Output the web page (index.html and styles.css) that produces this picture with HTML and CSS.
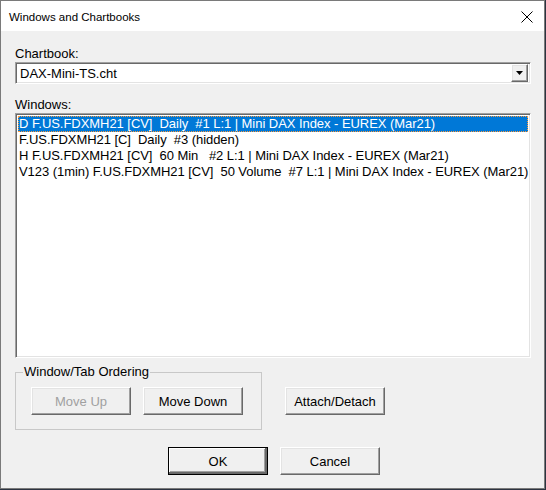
FILE: index.html
```html
<!DOCTYPE html>
<html>
<head>
<meta charset="utf-8">
<title>Windows and Chartbooks</title>
<link rel="stylesheet" href="styles.css">
</head>
<body>
<div class="window">
  <div class="titlebar">
    <span class="title">Windows and Chartbooks</span>
    <svg class="close" width="12" height="12" viewBox="0 0 12 12">
      <path d="M0.5 0.5 L11.5 11.5 M11.5 0.5 L0.5 11.5" stroke="#000" stroke-width="1" fill="none"/>
    </svg>
  </div>
  <div class="client">
    <div class="label">Chartbook:</div>
    <div class="combo">
      <span class="combo-text">DAX-Mini-TS.cht</span>
      <span class="combo-btn">
        <svg width="7" height="4" viewBox="0 0 7 4"><path d="M0 0 H7 L3.5 4 Z" fill="#000"/></svg>
      </span>
    </div>
    <div class="label label-windows">Windows:</div>
    <div class="listbox">
      <div class="item selected">D F.US.FDXMH21 [CV]  Daily  #1 L:1 | Mini DAX Index - EUREX (Mar21)</div>
      <div class="item">F.US.FDXMH21 [C]  Daily  #3 (hidden)</div>
      <div class="item">H F.US.FDXMH21 [CV]  60 Min   #2 L:1 | Mini DAX Index - EUREX (Mar21)</div>
      <div class="item">V123 (1min) F.US.FDXMH21 [CV]  50 Volume  #7 L:1 | Mini DAX Index - EUREX (Mar21)</div>
    </div>
    <div class="ordering-row">
      <fieldset class="group">
        <legend>Window/Tab Ordering</legend>
        <div class="group-buttons">
          <button class="btn" disabled>Move Up</button>
          <button class="btn">Move Down</button>
        </div>
      </fieldset>
      <button class="btn btn-attach">Attach/Detach</button>
    </div>
    <div class="footer">
      <button class="btn btn-default">OK</button>
      <button class="btn">Cancel</button>
    </div>
  </div>
</div>
</body>
</html>
```
FILE: styles.css
```css
html, body {
  margin: 0;
  padding: 0;
}

body {
  width: 546px;
  height: 490px;
  background: #2c3340;
  overflow: hidden;
  font-family: "Liberation Sans", Arial, sans-serif;
  font-size: 13px;
  line-height: 16px;
  color: #000;
}

.window {
  width: 545px;
  height: 489px;
  box-sizing: border-box;
  border: 1px solid #7a7a7a;
  background: #f0f0f0;
  display: flex;
  flex-direction: column;
}

.titlebar {
  height: 30px;
  flex: none;
  background: #fff;
  display: flex;
  align-items: center;
  justify-content: space-between;
  padding: 0 8px 0 8px;
}

.title {
  font-size: 11.5px;
  line-height: 16px;
  padding-top: 2px;
}

.close {
  display: block;
  margin-right: 3px;
  margin-top: 1px;
}

.client {
  flex: 1;
  padding: 15px 13px 0 14px;
  display: flex;
  flex-direction: column;
}

.label-windows {
  margin-top: 13px;
}

/* sunken 3D edge used by the combo and list */
.combo,
.listbox {
  box-sizing: border-box;
  background: #fff;
  border: 1px solid;
  border-color: #a0a0a0 #fff #fff #a0a0a0;
  box-shadow: inset 1px 1px #696969, inset -1px -1px #e3e3e3;
}

.combo {
  height: 22px;
  display: flex;
  align-items: center;
  justify-content: space-between;
  padding: 2px 2px 2px 3px;
}

.combo-text {
  line-height: 16px;
  padding-left: 1px;
  padding-top: 1px;
}

.combo-btn {
  width: 17px;
  height: 18px;
  box-sizing: border-box;
  background: #f0f0f0;
  border: 1px solid;
  border-color: #fff #696969 #696969 #fff;
  box-shadow: inset -1px -1px #a0a0a0, inset 1px 1px #e3e3e3;
  display: flex;
  align-items: center;
  justify-content: center;
}

.combo-btn svg {
  display: block;
}

.listbox {
  height: 245px;
  padding: 2px;
}

.item {
  height: 16px;
  box-sizing: border-box;
  padding-left: 0;
  white-space: pre;
  border: 1px solid transparent;
  line-height: 14px;
  letter-spacing: -0.05px;
}

.item.selected {
  background: #0078d7;
  color: #fff;
  border: 1px dotted #ff9a3a;
}

.ordering-row {
  display: flex;
  align-items: flex-start;
  margin-top: 6px;
}

.group {
  width: 247px;
  box-sizing: border-box;
  margin: 0;
  padding: 7px 15px 14px 15px;
  border: 1px solid #c8c8c8;
  min-inline-size: 0;
}

.group legend {
  margin-left: -8px;
  padding: 0 1px;
  line-height: 16px;
}

.group-buttons {
  display: flex;
  gap: 12px;
}

.btn {
  width: 100px;
  height: 28px;
  box-sizing: border-box;
  margin: 0;
  padding: 0;
  font-family: "Liberation Sans", Arial, sans-serif;
  font-size: 13px;
  color: #000;
  background: #f0f0f0;
  border: 1px solid;
  border-color: #fff #696969 #696969 #fff;
  box-shadow: inset -1px -1px #a0a0a0, inset 1px 1px #e3e3e3;
  border-radius: 0;
}

.btn:disabled {
  color: #a0a0a0;
}

.btn-attach {
  margin-left: 23px;
  margin-top: 23px;
}

.btn-default {
  border-color: #000;
  box-shadow: inset -2px -2px #696969, inset 1px 1px #fff, inset -3px -3px #a0a0a0;
}

.footer {
  display: flex;
  justify-content: center;
  gap: 12px;
  margin-top: 17px;
  padding-left: 2px;
}
```
